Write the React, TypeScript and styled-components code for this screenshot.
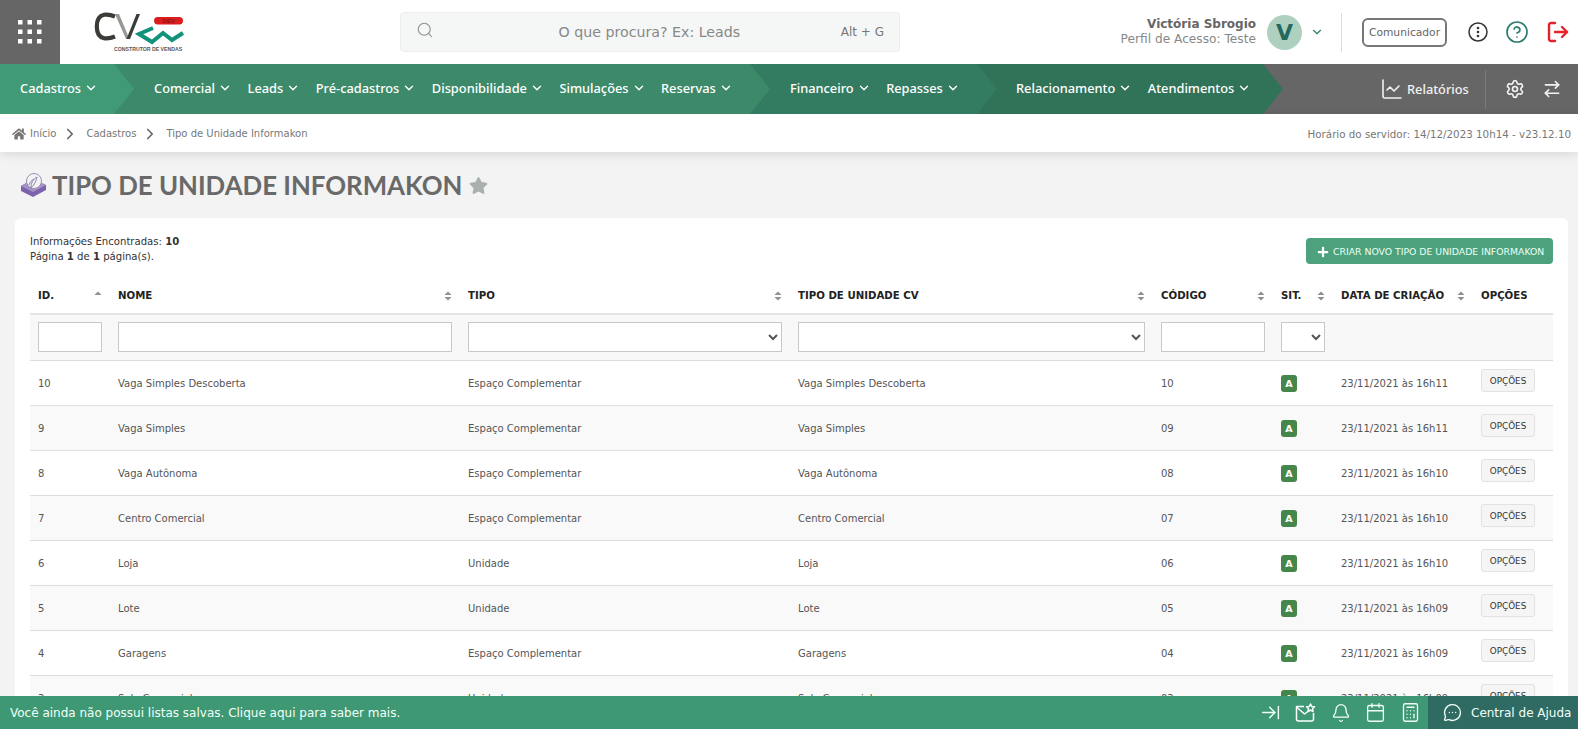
import { ArrowRightLeft, ArrowRightToLine, Bell, Calculator, Calendar, ChartLine, ChevronDown, ChevronRight, CircleHelp, LogOut, MessageCircleMore, Search, Settings } from 'lucide-react'
import { FaHome, FaPlus, FaStar } from 'react-icons/fa'
import styled, { createGlobalStyle } from 'styled-components'

const GlobalStyle = createGlobalStyle`
  html, body {
    margin: 0;
    height: 100%;
    overflow: hidden;
    background: #f3f3f3;
    font-family: "DejaVu Sans", sans-serif;
  }
  * {
    box-sizing: border-box;
  }
`

const Page = styled.div`
  height: 729px;
  overflow: hidden;
`

const Header = styled.header`
  height: 64px;
  background: #fff;
  display: flex;
  align-items: center;
`

const AppsButton = styled.div`
  width: 60px;
  height: 64px;
  background: #666;
  display: flex;
  align-items: center;
  justify-content: center;
`

const LogoBox = styled.div`
  margin-left: 25px;
  width: 315px;
  height: 50px;
  display: flex;
  align-items: center;
`

const SearchBox = styled.div`
  width: 500px;
  height: 40px;
  background: #f5f6f6;
  border: 1px solid #eceeee;
  border-radius: 4px;
  display: flex;
  align-items: center;
  padding: 0 15px 0 15px;
  color: #8b8f8f;

  & > svg {
    margin-bottom: 5px;
  }
`

const SearchText = styled.span`
  flex: 1;
  text-align: center;
  font-size: 14.2px;
  color: #888;
  padding-left: 24px;
`

const SearchKeys = styled.span`
  font-size: 12px;
  color: #777;
`

const UserArea = styled.div`
  margin-left: auto;
  display: flex;
  align-items: center;
  height: 64px;
`

const UserInfo = styled.div`
  text-align: right;
  font-size: 12.2px;
  line-height: 15px;
  color: #888;
`

const UserName = styled.div`
  font-size: 12px;
  font-weight: 700;
  color: #666;
`

const Avatar = styled.div`
  width: 35px;
  height: 35px;
  border-radius: 50%;
  margin-left: 11px;
  background: #aed0bf;
  color: #24685f;
  font-size: 22px;
  font-weight: 700;
  display: flex;
  align-items: center;
  justify-content: center;
`

const UserChevron = styled.div`
  width: 39px;
  padding-right: 9px;
  display: flex;
  justify-content: center;
  color: #2f7c70;
`

const VerticalRule = styled.div`
  width: 1px;
  height: 39px;
  background: #ddd;
`

const Communicator = styled.div`
  margin-left: 20px;
  width: 85px;
  height: 29px;
  border: 2px solid #777;
  border-radius: 6px;
  font-size: 10.7px;
  color: #666;
  display: flex;
  align-items: center;
  justify-content: center;
`

const HeaderIcons = styled.div`
  width: 131px;
  display: flex;
  align-items: center;
  padding-left: 21px;
  gap: 17px;
`

const Nav = styled.nav`
  height: 50px;
  background: #666;
  display: flex;
  color: #fff;
`

const NavSegment = styled.div<{ $bg: string; $width: number; $depth: number; $pad: number }>`
  position: relative;
  z-index: ${({ $depth }) => $depth};
  width: ${({ $width }) => $width}px;
  background: ${({ $bg }) => $bg};
  padding: 0 0 2px ${({ $pad }) => $pad}px;
  display: flex;
  align-items: center;
  gap: 15.5px;

  &::after {
    content: '';
    position: absolute;
    left: 100%;
    top: 0;
    border-left: 20px solid ${({ $bg }) => $bg};
    border-top: 25px solid transparent;
    border-bottom: 25px solid transparent;
  }
`

const NavItem = styled.div`
  display: flex;
  align-items: center;
  gap: 3px;
  font-family: "Noto Sans", sans-serif;
  font-size: 12.8px;
  font-weight: 500;
  white-space: nowrap;
`

const NavTools = styled.div`
  margin-left: auto;
  width: 198px;
  display: flex;
  align-items: center;
  color: #f2f2f2;
`

const ReportLink = styled.div`
  width: 105px;
  display: flex;
  align-items: center;
  gap: 3px;
  font-family: "Noto Sans", sans-serif;
  font-size: 12.8px;
  font-weight: 500;
`

const NavRule = styled.div`
  width: 1px;
  height: 39px;
  background: #7a7a7a;
`

const NavToolIcons = styled.div`
  display: flex;
  align-items: center;
  gap: 17px;
  padding-left: 19px;
`

const Breadcrumb = styled.div`
  position: relative;
  height: 38px;
  background: #fff;
  box-shadow: 0 2px 12px rgba(0, 0, 0, 0.12);
  display: flex;
  align-items: center;
  padding: 1px 7px 0 12px;
  font-size: 10px;
  color: #777;
`

const Crumb = styled.span`
  margin-left: 4px;
`

const CrumbSeparator = styled.span`
  display: flex;
  margin: 0 3px 0 5px;
  color: #666;
`

const ServerTime = styled.span`
  margin-left: auto;
  font-size: 10.3px;
`

const Main = styled.main`
  padding: 0 10px 0 15px;
`

const TitleRow = styled.div`
  height: 66px;
  display: flex;
  align-items: center;
  padding: 0 0 0 5px;
  color: #666;
`

const Title = styled.h1`
  margin: 0 7px 0 4px;
  font-family: Lato, sans-serif;
  font-size: 25.8px;
  font-weight: 700;
  color: #696969;
`

const Card = styled.section`
  background: #fff;
  border-radius: 6px;
  padding: 15px 15px 0;
`

const CardTop = styled.div`
  height: 47px;
  display: flex;
  justify-content: space-between;
  align-items: flex-start;
`

const Summary = styled.div`
  font-size: 10.1px;
  line-height: 15px;
  color: #333;
  padding-top: 1px;
`

const CreateButton = styled.div`
  margin-top: 5px;
  height: 26px;
  width: 247px;
  background: #4da27d;
  border-radius: 4px;
  color: #eafff4;
  font-size: 9.3px;
  display: flex;
  align-items: center;
  gap: 4px;
  padding-left: 11px;
  white-space: nowrap;

  & > svg {
    flex-shrink: 0;
    margin-top: 2px;
  }
`

const Table = styled.table`
  width: 1523px;
  table-layout: fixed;
  border-collapse: collapse;
  font-size: 10px;
  color: #555;
`

const HeadCell = styled.th`
  height: 34px;
  padding: 0 8px 2px;
  text-align: left;
  font-size: 10.2px;
  font-weight: 700;
  color: #222;
  border-bottom: 2px solid #e5e5e5;
`

const HeadInner = styled.div`
  display: flex;
  align-items: center;
  justify-content: space-between;
  white-space: nowrap;
`

const FilterRow = styled.tr`
  background: #f8f8f8;
`

const FilterCell = styled.td`
  height: 46px;
  padding: 0 8px;
  border-bottom: 1px solid #ddd;
`

const FilterInput = styled.input`
  display: block;
  width: 100%;
  height: 30px;
  border: 1px solid #c8c8c8;
  background: #fff;
  padding: 0 4px;
`

const FilterSelect = styled.select`
  display: block;
  width: 100%;
  height: 30px;
  border: 1px solid #c8c8c8;
  border-radius: 0;
  background: #fff;
  color: #555;
`

const Row = styled.tr`
  &:nth-child(even) {
    background: #f9f9f9;
  }
`

const Cell = styled.td`
  height: 45px;
  padding: 2px 8px 0;
  border-bottom: 1px solid #ddd;
  white-space: nowrap;
`

const Badge = styled.span`
  display: flex;
  width: 16px;
  height: 17px;
  border-radius: 3px;
  background: #45864a;
  color: #fff;
  font-size: 9.5px;
  font-weight: 700;
  align-items: center;
  justify-content: center;
`

const OptionsButton = styled.div`
  width: 54px;
  height: 23px;
  margin-bottom: 6px;
  border: 1px solid #e2e2e2;
  border-radius: 3px;
  background: #f5f5f5;
  color: #333;
  font-size: 8.8px;
  display: flex;
  align-items: center;
  justify-content: center;
`

const BottomBar = styled.footer`
  position: fixed;
  left: 0;
  right: 0;
  bottom: 0;
  height: 33px;
  background: #3f9874;
  color: #f2fff9;
  display: flex;
  align-items: center;
  padding-left: 10px;
  font-size: 12px;
`

const BarIcons = styled.div`
  margin-left: auto;
  display: flex;
  align-items: center;
`

const BarIcon = styled.span`
  width: 35px;
  display: flex;
  justify-content: center;
`

const HelpBlock = styled.div`
  width: 150px;
  height: 33px;
  background: #2f6b62;
  display: flex;
  align-items: center;
  gap: 9px;
  padding-left: 15px;
  white-space: nowrap;
`

type Unit = { id: number; name: string; kind: string; code: string; date: string }

const units: Unit[] = [
  { id: 10, name: 'Vaga Simples Descoberta', kind: 'Espaço Complementar', code: '10', date: '23/11/2021 às 16h11' },
  { id: 9, name: 'Vaga Simples', kind: 'Espaço Complementar', code: '09', date: '23/11/2021 às 16h11' },
  { id: 8, name: 'Vaga Autônoma', kind: 'Espaço Complementar', code: '08', date: '23/11/2021 às 16h10' },
  { id: 7, name: 'Centro Comercial', kind: 'Espaço Complementar', code: '07', date: '23/11/2021 às 16h10' },
  { id: 6, name: 'Loja', kind: 'Unidade', code: '06', date: '23/11/2021 às 16h10' },
  { id: 5, name: 'Lote', kind: 'Unidade', code: '05', date: '23/11/2021 às 16h09' },
  { id: 4, name: 'Garagens', kind: 'Espaço Complementar', code: '04', date: '23/11/2021 às 16h09' },
  { id: 3, name: 'Sala Comercial', kind: 'Unidade', code: '03', date: '23/11/2021 às 16h09' },
]

const columns = [
  { label: 'ID.', width: 80, sort: 'up' },
  { label: 'NOME', width: 350, sort: 'both' },
  { label: 'TIPO', width: 330, sort: 'both' },
  { label: 'TIPO DE UNIDADE CV', width: 363, sort: 'both' },
  { label: 'CÓDIGO', width: 120, sort: 'both' },
  { label: 'SIT.', width: 60, sort: 'both' },
  { label: 'DATA DE CRIAÇÃO', width: 140, sort: 'both' },
  { label: 'OPÇÕES', width: 80, sort: 'none' },
]

const navGroups = [
  { bg: '#409a75', width: 114, depth: 4, pad: 20, items: ['Cadastros'] },
  { bg: '#3c8a6a', width: 636, depth: 3, pad: 40, items: ['Comercial', 'Leads', 'Pré-cadastros', 'Disponibilidade', 'Simulações', 'Reservas'] },
  { bg: '#347c61', width: 227, depth: 2, pad: 40, items: ['Financeiro', 'Repasses'] },
  { bg: '#317358', width: 286, depth: 1, pad: 39, items: ['Relacionamento', 'Atendimentos'] },
]

const SortIcon = ({ mode }: { mode: string }) => (
  <svg width="8" height="10" viewBox="0 0 8 10" fill="#8f8f8f">
    <path d="M4 0.5 7.5 4H.5z" />
    {mode === 'both' && <path d="M4 9.5.5 6h7z" />}
  </svg>
)

const AppsIcon = () => (
  <svg width="24" height="24" viewBox="0 0 24 24" fill="#fff">
    {[0, 9.5, 19].flatMap(y => [0, 9.5, 19].map(x => <rect key={`${x}-${y}`} x={x} y={y} width="4.5" height="4.5" />))}
  </svg>
)

const Logo = () => (
  <svg width="102" height="46" viewBox="0 0 102 46">
    <path d="M30 7.500C26 5.800 22 5.200 19 5.800 14 6.800 11.800 11 11.800 17.500s2.200 10.700 7.200 11.700c3 .6 7 0 11-1.700" fill="none" stroke="#3b3b37" strokeWidth="4.200" />
    <path d="M30 5l11 25h3.500L34 5z" fill="#9a9694" />
    <path d="M41.500 30h3.500L55 5h-3.500z" fill="#3b3b37" />
    <path d="M68 19 54 25l13 8 11-9 9 7 11-7" fill="none" stroke="#12927a" strokeWidth="4" />
    <rect x="69" y="8" width="29" height="7.500" rx="3.700" fill="#d81e1e" />
    <text x="83.500" y="14" textAnchor="middle" fontSize="6" fontFamily="Liberation Sans, sans-serif" fill="#7a1010">DEV</text>
    <text x="29" y="42" fontSize="5.200" fontWeight="700" fontFamily="Liberation Sans, sans-serif" fill="#555">CONSTRUTOR DE VENDAS</text>
  </svg>
)

const DotsIcon = () => (
  <svg width="20" height="20" viewBox="0 0 20 20" fill="none" stroke="#333" strokeWidth="1.500">
    <circle cx="10" cy="10" r="9" />
    <circle cx="10" cy="6" r=".6" fill="#333" />
    <circle cx="10" cy="10" r=".6" fill="#333" />
    <circle cx="10" cy="14" r=".6" fill="#333" />
  </svg>
)

const TitleIcon = () => (
  <svg width="28" height="26" viewBox="0 0 28 26">
    <path d="M1 14 13 7l13 6v5l-13 7-12-6z" fill="#7b62ad" />
    <path d="M1 14l12 6 13-7-13-6z" fill="#a592c9" />
    <circle cx="14" cy="9" r="7.500" fill="#f3f3f3" stroke="#9a8fb5" strokeWidth="1" />
    <path d="M11 16c0-5 2-9 6-11-1 4-2 7-6 11zM9 13c1-3 3-5 5-6" fill="none" stroke="#8a7fa8" strokeWidth="1" />
  </svg>
)

const MailStarIcon = () => (
  <svg width="21" height="19" viewBox="0 0 21 19" fill="none" stroke="#fff" strokeWidth="1.500" strokeLinejoin="round">
    <path d="M9 3.500H1.500V16a2 2 0 0 0 2 2h13a2 2 0 0 0 2-2v-6" />
    <path d="M1.500 4l8 7 4-3" />
    <path d="M15.500 1l1.200 2.500 2.800.3-2 1.900.5 2.800-2.500-1.400-2.500 1.400.5-2.800-2-1.900 2.800-.3z" />
  </svg>
)

const App = () => (
  <Page>
    <GlobalStyle />
    <Header>
      <AppsButton>
        <AppsIcon />
      </AppsButton>
      <LogoBox>
        <Logo />
      </LogoBox>
      <SearchBox>
        <Search size={18} strokeWidth={1.4} />
        <SearchText>O que procura? Ex: Leads</SearchText>
        <SearchKeys>Alt + G</SearchKeys>
      </SearchBox>
      <UserArea>
        <UserInfo>
          <UserName>Victória Sbrogio</UserName>
          Perfil de Acesso: Teste
        </UserInfo>
        <Avatar>V</Avatar>
        <UserChevron>
          <ChevronDown size={14} />
        </UserChevron>
        <VerticalRule />
        <Communicator>Comunicador</Communicator>
        <HeaderIcons>
          <DotsIcon />
          <CircleHelp size={24} color="#2f7c70" strokeWidth={1.7} />
          <LogOut size={24} color="#e8202a" strokeWidth={2.4} />
        </HeaderIcons>
      </UserArea>
    </Header>
    <Nav>
      {navGroups.map(group => (
        <NavSegment key={group.bg} $bg={group.bg} $width={group.width} $depth={group.depth} $pad={group.pad}>
          {group.items.map(item => (
            <NavItem key={item}>
              {item}
              <ChevronDown size={14} strokeWidth={2.4} />
            </NavItem>
          ))}
        </NavSegment>
      ))}
      <NavTools>
        <ReportLink>
          <ChartLine size={24} strokeWidth={1.6} />
          Relatórios
        </ReportLink>
        <NavRule />
        <NavToolIcons>
          <Settings size={20} strokeWidth={2} />
          <ArrowRightLeft size={20} strokeWidth={1.9} />
        </NavToolIcons>
      </NavTools>
    </Nav>
    <Breadcrumb>
      <FaHome size={14} />
      <Crumb>Início</Crumb>
      <CrumbSeparator>
        <ChevronRight size={18} strokeWidth={2.2} />
      </CrumbSeparator>
      <Crumb>Cadastros</Crumb>
      <CrumbSeparator>
        <ChevronRight size={18} strokeWidth={2.2} />
      </CrumbSeparator>
      <Crumb>Tipo de Unidade Informakon</Crumb>
      <ServerTime>Horário do servidor: 14/12/2023 10h14 - v23.12.10</ServerTime>
    </Breadcrumb>
    <Main>
      <TitleRow>
        <TitleIcon />
        <Title>TIPO DE UNIDADE INFORMAKON</Title>
        <FaStar size={19} color="#a9b0ad" />
      </TitleRow>
      <Card>
        <CardTop>
          <Summary>
            Informações Encontradas: <b>10</b>
            <br />
            Página <b>1</b> de <b>1</b> página(s).
          </Summary>
          <CreateButton>
            <FaPlus size={12} color="#fff" />
            CRIAR NOVO TIPO DE UNIDADE INFORMAKON
          </CreateButton>
        </CardTop>
        <Table>
          <colgroup>
            {columns.map(column => (
              <col key={column.label} width={column.width} />
            ))}
          </colgroup>
          <thead>
            <tr>
              {columns.map(column => (
                <HeadCell key={column.label}>
                  <HeadInner>
                    {column.label}
                    {column.sort !== 'none' && <SortIcon mode={column.sort} />}
                  </HeadInner>
                </HeadCell>
              ))}
            </tr>
            <FilterRow>
              <FilterCell>
                <FilterInput />
              </FilterCell>
              <FilterCell>
                <FilterInput />
              </FilterCell>
              <FilterCell>
                <FilterSelect />
              </FilterCell>
              <FilterCell>
                <FilterSelect />
              </FilterCell>
              <FilterCell>
                <FilterInput />
              </FilterCell>
              <FilterCell>
                <FilterSelect />
              </FilterCell>
              <FilterCell />
              <FilterCell />
            </FilterRow>
          </thead>
          <tbody>
            {units.map(unit => (
              <Row key={unit.id}>
                <Cell>{unit.id}</Cell>
                <Cell>{unit.name}</Cell>
                <Cell>{unit.kind}</Cell>
                <Cell>{unit.name}</Cell>
                <Cell>{unit.code}</Cell>
                <Cell>
                  <Badge>A</Badge>
                </Cell>
                <Cell>{unit.date}</Cell>
                <Cell>
                  <OptionsButton>OPÇÕES</OptionsButton>
                </Cell>
              </Row>
            ))}
          </tbody>
        </Table>
      </Card>
    </Main>
    <BottomBar>
      Você ainda não possui listas salvas. Clique aqui para saber mais.
      <BarIcons>
        <BarIcon>
          <ArrowRightToLine size={21} strokeWidth={1.6} />
        </BarIcon>
        <BarIcon>
          <MailStarIcon />
        </BarIcon>
        <BarIcon>
          <Bell size={20} strokeWidth={1.6} />
        </BarIcon>
        <BarIcon>
          <Calendar size={21} strokeWidth={1.5} />
        </BarIcon>
        <BarIcon>
          <Calculator size={21} strokeWidth={1.5} />
        </BarIcon>
      </BarIcons>
      <HelpBlock>
        <MessageCircleMore size={19} strokeWidth={1.7} />
        Central de Ajuda
      </HelpBlock>
    </BottomBar>
  </Page>
)

export default App
